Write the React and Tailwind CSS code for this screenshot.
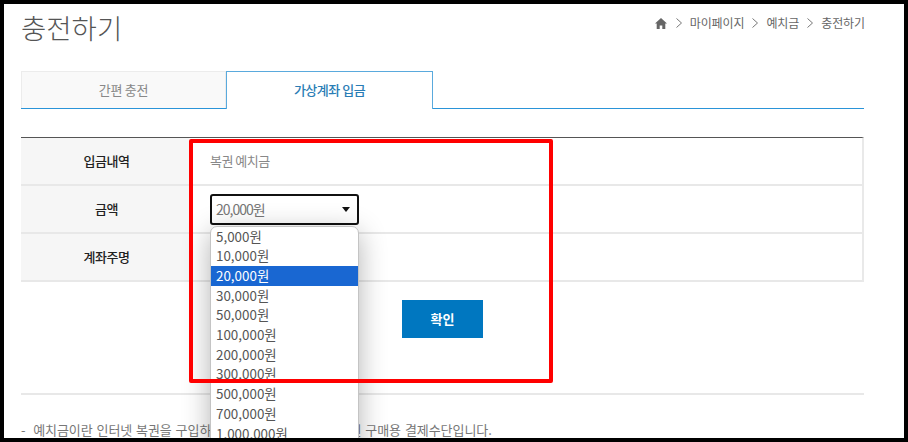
import React from "react";

const options = [
  "5,000원",
  "10,000원",
  "20,000원",
  "30,000원",
  "50,000원",
  "100,000원",
  "200,000원",
  "300,000원",
  "500,000원",
  "700,000원",
  "1,000,000원",
];

const Chevron = () => (
  <svg className="w-[6px] h-[10px] text-[#777]" viewBox="0 0 6 10" fill="none" stroke="currentColor" strokeWidth="1">
    <path d="M0.5 0.5L5.5 5L0.5 9.5" />
  </svg>
);

const Row = ({ label, children }) => (
  <div className="flex h-[48px] border-b-2 border-[#e8e8e8]">
    <div className="w-[168px] shrink-0 bg-[#f6f6f6] flex items-center justify-center pl-[3px] pb-[1px] text-[13px] font-medium text-[#222] tracking-[-0.4px]">
      {label}
    </div>
    <div className="flex-1 flex items-center pl-[21px] text-[13px] text-[#888] tracking-[-0.5px]">{children}</div>
  </div>
);

export default function App() {
  return (
    <div className="w-[908px] h-[442px] bg-black p-[4px] font-['Noto_Sans_CJK_KR','Noto_Sans',sans-serif]">
      <div className="relative w-[900px] h-[434px] bg-white overflow-hidden pl-[17px] pr-[40px]">
        <div className="flex justify-between items-start h-[67px]">
          <h1 className="text-[27.5px] leading-[40px] font-light text-[#555] mt-[3px]">충전하기</h1>
          <div className="flex items-center gap-[8px] mt-[10px] text-[12px] leading-[18px] text-[#666] tracking-[-0.1px] mr-[-1px]">
            <svg className="w-[12px] h-[11px] text-[#666] mr-[1px]" viewBox="0 0 12 11" fill="currentColor">
              <path d="M6 0L0 5.6h1.7V11h3V7.4h2.6V11h3V5.6H12z" />
            </svg>
            <Chevron />
            <span>마이페이지</span>
            <Chevron />
            <span>예치금</span>
            <Chevron />
            <span>충전하기</span>
          </div>
        </div>

        <div className="flex h-[38px] border-b border-[#2a94d8]">
          <div className="w-[205px] h-[37px] bg-[#f9f9f9] border-t border-x border-[#ececec] flex items-center justify-center text-[13px] text-[#888] tracking-[-0.3px]">
            간편 충전
          </div>
          <div className="w-[207px] h-[38px] bg-white border-t border-x border-[#5aaadd] flex items-center justify-center pb-[1px] text-[13px] font-medium text-[#2a7db5] tracking-[-0.5px]">
            가상계좌 입금
          </div>
        </div>

        <div className="mt-[28px] border-t border-[#555] border-r-2 border-r-[#e9e9e9]">
          <Row label="입금내역">복권 예치금</Row>
          <Row label="금액">
            <div className="relative">
              <div className="w-[149px] h-[31px] border-2 border-[#111] rounded-[3px] bg-white flex items-center justify-between pl-[4px] pr-[7px] text-[14px] tracking-[-1px] text-[#777]">
                <span>20,000원</span>
                <span className="w-0 h-0 border-x-[4px] border-x-transparent border-t-[5px] border-t-[#111]" />
              </div>
              <ul className="absolute left-0 top-[32px] w-[149px] h-[240px] overflow-hidden bg-white border border-[#c4c4c4] rounded-[7px] shadow-[0_6px_28px_rgba(0,0,0,0.3)] text-[13.4px] leading-[19.7px] text-[#555] tracking-normal z-10">
                {options.map((o) => (
                  <li key={o} className={`pl-[5px] ${o === "20,000원" ? "bg-[#1967d2] text-white" : ""}`}>
                    {o}
                  </li>
                ))}
              </ul>
            </div>
          </Row>
          <Row label="계좌주명" />
        </div>

        <div className="flex justify-center mt-[18px]">
          <button className="w-[81px] h-[38px] bg-[#0077c0] text-white text-[13px] font-bold">확인</button>
        </div>

        <div className="mt-[55px] border-t-2 border-[#e8e8e8] pt-[25px] text-[13px] leading-[19px] text-[#777] tracking-[-0.06px] [word-spacing:1px] whitespace-nowrap">
          -&nbsp;&nbsp;예치금이란 인터넷 복권을 구입하실 때 사용하실 수 있는 복권 구매용 결제수단입니다.
        </div>

        <div className="absolute left-[185px] top-[135px] w-[364px] h-[244px] border-[4px] border-[#ff0000] rounded-[2px] pointer-events-none z-20" />
      </div>
    </div>
  );
}
